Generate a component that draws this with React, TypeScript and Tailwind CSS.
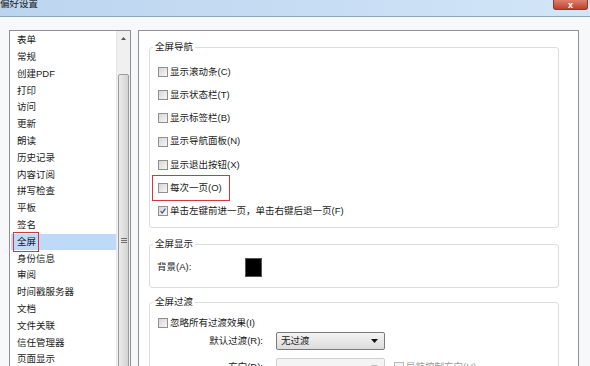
import React from "react";

const navItems = [
	"表单",
	"常规",
	"创建PDF",
	"打印",
	"访问",
	"更新",
	"朗读",
	"历史记录",
	"内容订阅",
	"拼写检查",
	"平板",
	"签名",
	"全屏",
	"身份信息",
	"审阅",
	"时间戳服务器",
	"文档",
	"文件关联",
	"信任管理器",
	"页面显示",
];

const navOptions = [
	{ label: "显示滚动条(C)", checked: false },
	{ label: "显示状态栏(T)", checked: false },
	{ label: "显示标签栏(B)", checked: false },
	{ label: "显示导航面板(N)", checked: false },
	{ label: "显示退出按钮(X)", checked: false },
	{ label: "每次一页(O)", checked: false, marked: true },
	{ label: "单击左键前进一页，单击右键后退一页(F)", checked: true },
];

const CheckBox = ({ checked = false }: { checked?: boolean }) => (
	<span className="relative w-[10px] h-[10px] shrink-0 border border-[#8f8f8f] bg-gradient-to-br from-[#d6d6d6] to-[#f7f7f7]">
		{checked && (
			<svg viewBox="0 0 10 10" className="absolute inset-0 w-full h-full">
				<path d="M2 5 L4 7.5 L8 2" fill="none" stroke="#3c4f8f" strokeWidth="1.5" />
			</svg>
		)}
	</span>
);

const GroupBox = ({
	title,
	className,
	children,
}: {
	title: string;
	className: string;
	children?: React.ReactNode;
}) => (
	<div className={`relative border border-[#d9dde0] rounded-[3px] ${className}`}>
		<span className="absolute -top-[8px] left-[3px] bg-white px-[2px] leading-[14px]">
			{title}
		</span>
		{children}
	</div>
);

const Dropdown = ({ value, disabled = false }: { value?: string; disabled?: boolean }) => (
	<div
		className={`w-[109px] h-[18px] flex items-center justify-between pl-[4px] pr-[6px] rounded-[2px] border ${
			disabled
				? "border-[#cfcfcf] bg-[#f4f4f4]"
				: "border-[#7a7a7a] bg-gradient-to-b from-[#f4f4f4] to-[#dcdcdc]"
		}`}>
		<span>{value}</span>
		<svg viewBox="0 0 7 4" className="w-[7px] h-[4px]">
			<path d="M0 0 H7 L3.5 4 Z" fill={disabled ? "#bdbdbd" : "#111"} />
		</svg>
	</div>
);

export default function App() {
	return (
		<div
			className="w-[590px] h-[366px] overflow-hidden bg-[#f7f8f9] text-[9.5px] text-[#1a1a1a]"
			style={{ fontFamily: '"Liberation Sans", "Noto Sans CJK SC", sans-serif' }}>
			{/* Title bar */}
			<div className="h-[17px] flex justify-between items-start bg-gradient-to-r from-[#bcd5ef] via-[#c6dcf3] to-[#d3e6f8] border-b border-[#8ea5bf]">
				<span className="leading-[10px] -mt-px">偏好设置</span>
				<div className="mr-[2px] w-[35px] h-[10px] flex items-center justify-center rounded-b-[3px] bg-gradient-to-b from-[#dc806b] to-[#bf3f2c] border border-[#8a3a2e] border-t-0">
					<span className="text-white text-[9px] leading-[8px] font-bold">x</span>
				</div>
			</div>

			{/* Body */}
			<div className="flex gap-[7px] pl-[9px] pt-[13px]">
				{/* Category list */}
				<div className="w-[122px] h-[400px] flex border border-[#8b9097] bg-white">
					<div className="flex-1 pt-px pl-px">
						{navItems.map((item) => (
							<div
								key={item}
								className={`h-[16.8px] flex items-center pl-[6px] ${
									item === "全屏" ? "bg-[#bfd9f8]" : ""
								}`}>
								<span className="relative">
									{item}
									{item === "全屏" && (
										<span className="absolute -left-[4px] -right-[3px] -top-[3px] -bottom-[3px] border-[1.5px] border-[#d8343c]"></span>
									)}
								</span>
							</div>
						))}
					</div>
					{/* Scrollbar */}
					<div className="w-[14px] flex flex-col bg-[#f0f0f0] border-l border-[#e6e6e6]">
						<div className="h-[15px] flex items-center justify-center">
							<svg viewBox="0 0 5 3" className="w-[5px] h-[3px]">
								<path d="M0 3 L2.5 0 L5 3 Z" fill="#555" />
							</svg>
						</div>
						<div className="h-[28px]"></div>
						<div className="flex-1 mx-px rounded-[2px] border border-[#9b9b9b] bg-gradient-to-r from-[#ececec] to-[#d3d3d3] flex flex-col items-center">
							<div className="mt-[163px] flex flex-col gap-[1px]">
								<span className="w-[6px] h-px bg-[#6f6f6f]"></span>
								<span className="w-[6px] h-px bg-[#6f6f6f]"></span>
								<span className="w-[6px] h-px bg-[#6f6f6f]"></span>
							</div>
						</div>
					</div>
				</div>

				{/* Settings panel */}
				<div className="w-[441px] h-[400px] border border-[#8e9296] bg-white pl-[10px] pt-[16px]">
					<GroupBox title="全屏导航" className="w-[410px] h-[181px] pt-[12px] pl-[8px]">
						{navOptions.map((opt) => (
							<div key={opt.label} className="h-[23.3px] flex items-center gap-[2px]">
								<span className="relative flex items-center gap-[2px]">
									<CheckBox checked={opt.checked} />
									<span>{opt.label}</span>
									{opt.marked && (
										<span className="absolute -left-[6px] -right-[8px] -top-[6px] -bottom-[6px] border-[1.5px] border-[#d8343c]"></span>
									)}
								</span>
							</div>
						))}
					</GroupBox>

					<GroupBox title="全屏显示" className="w-[410px] h-[44px] mt-[16px] pl-[7px] flex items-center gap-[54px] pt-[3px]">
						<span>背景(A):</span>
						<span className="w-[17px] h-[19px] bg-black border border-[#555]"></span>
					</GroupBox>

					<GroupBox title="全屏过渡" className="w-[410px] h-[120px] mt-[14px] pt-[13px]">
						<div className="h-[14px] pl-[8px] flex items-center gap-[2px]">
							<CheckBox />
							<span>忽略所有过渡效果(I)</span>
						</div>
						<div className="mt-[2px] flex items-center h-[18px]">
							<span className="w-[113px] text-right">默认过渡(R):</span>
							<span className="ml-[13px]">
								<Dropdown value="无过渡" />
							</span>
						</div>
						<div className="mt-[8px] flex items-center h-[18px]">
							<span className="w-[113px] text-right">方向(D):</span>
							<span className="ml-[13px]">
								<Dropdown disabled />
							</span>
							<span className="ml-[9px] flex items-center gap-[2px] text-[#9a9a9a]">
								<span className="w-[10px] h-[10px] border border-[#b9b9b9] bg-[#f4f4f4]"></span>
								导航控制方向(U)
							</span>
						</div>
					</GroupBox>
				</div>
			</div>
		</div>
	);
}
